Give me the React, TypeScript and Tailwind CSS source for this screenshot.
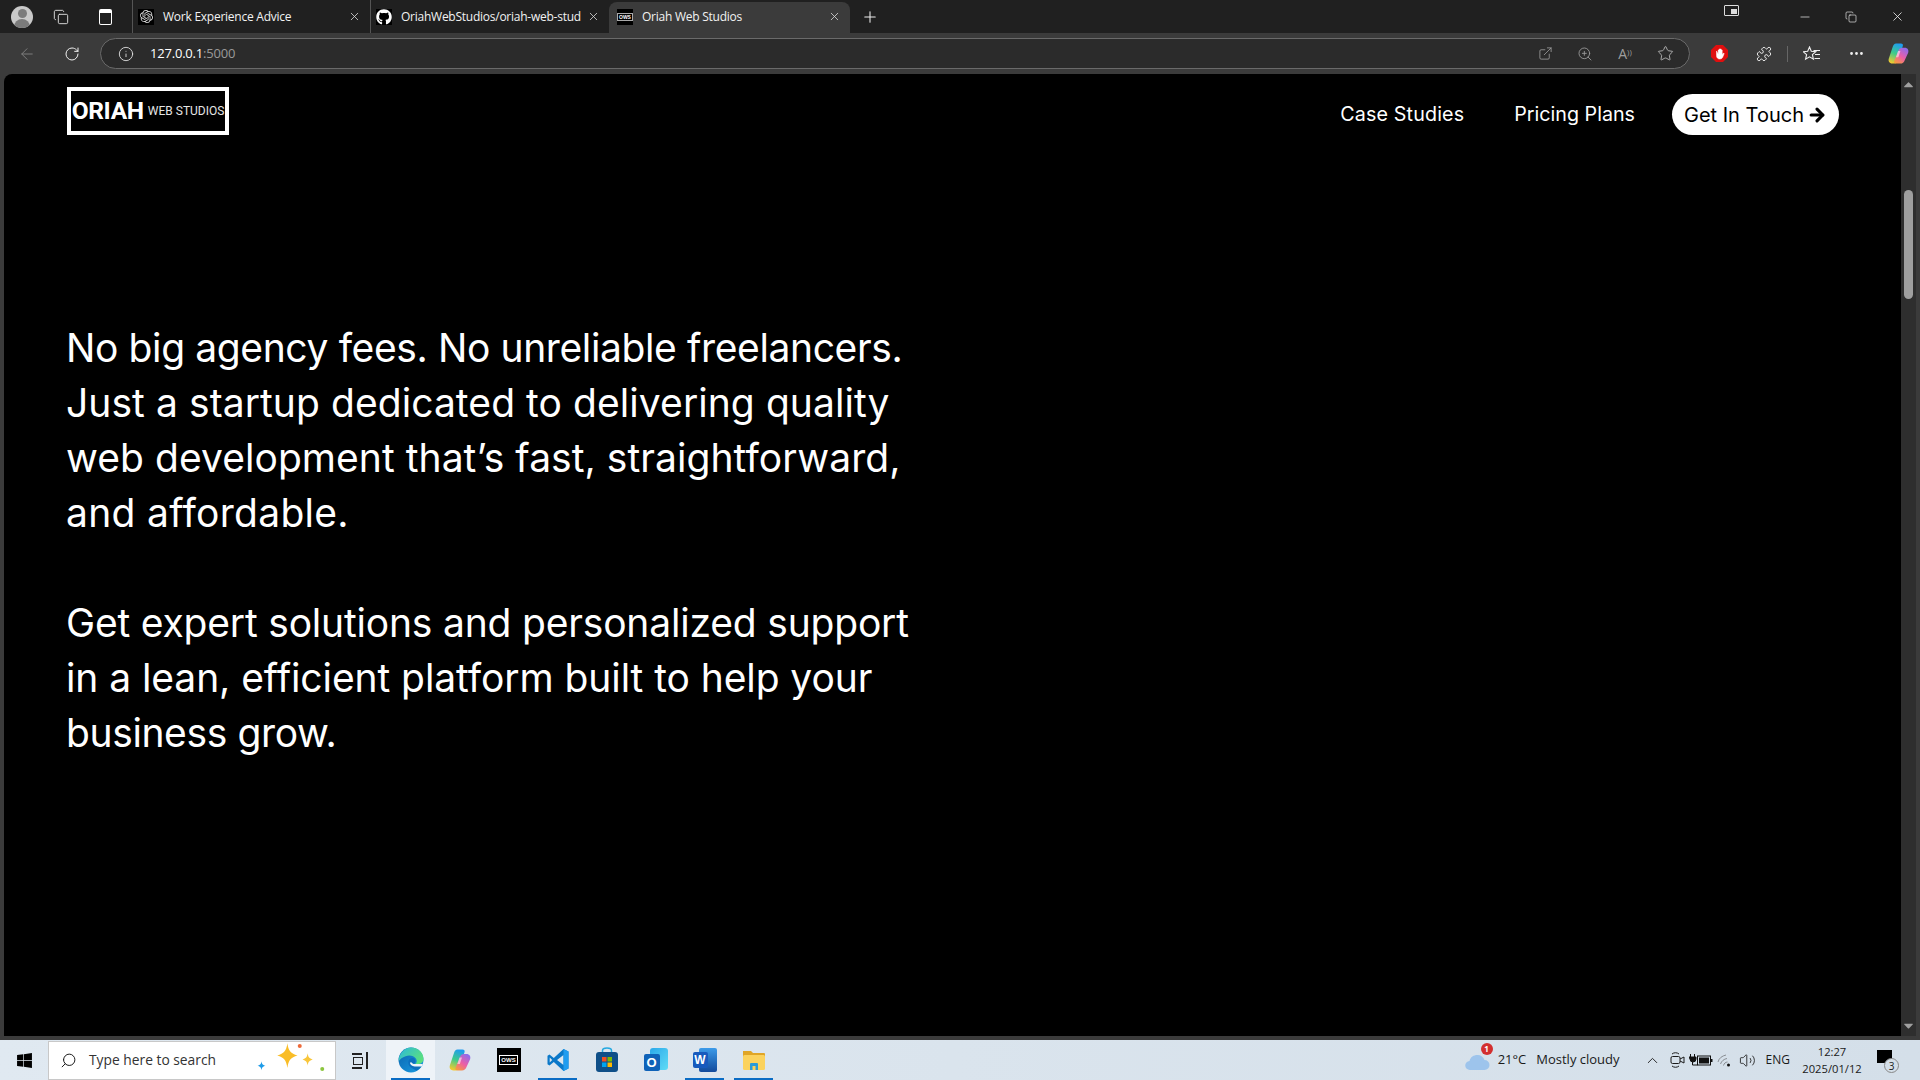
import { ArrowLeft, RotateCw, Info, ExternalLink, ZoomIn, Star, Minus, X, Plus, Search, ChevronUp, Volume2, MoreHorizontal, ArrowRight, Puzzle, Copy } from 'lucide-react';
import { FaGithub, FaWindows, FaCaretUp, FaCaretDown } from 'react-icons/fa';
import { SiOpenai } from 'react-icons/si';

const UI_FONT = "font-['Open_Sans','Noto_Sans',sans-serif]";

// per-line tracking keeps the line ends close to the original Poppins widths
const BODY_COPY = [
  [
    { text: 'No big agency fees. No unreliable freelancers.', track: 'tracking-[-0.38px]' },
    { text: 'Just a startup dedicated to delivering quality', track: 'tracking-[0.07px]' },
    { text: 'web development that’s fast, straightforward,', track: 'tracking-[0.05px]' },
    { text: 'and affordable.', track: 'tracking-[0.3px]' },
  ],
  [
    { text: 'Get expert solutions and personalized support', track: 'tracking-[-0.19px]' },
    { text: 'in a lean, efficient platform built to help your', track: 'tracking-[-0.08px]' },
    { text: 'business grow.', track: 'tracking-[-0.38px]' },
  ],
];

const Tab: React.FC<{ title: string; icon: React.ReactNode; width: string; active?: boolean }> = ({ title, icon, width, active }) => (
  <div className={`flex shrink-0 items-center pr-[9px] ${width} ${active ? 'mt-[2px] h-[31px] rounded-t-lg bg-[#3b3b3b] pb-[2px] pl-[8px]' : 'h-[33px] border-l border-[#555] pl-[5px]'}`}>
    <span className="flex h-4 w-4 shrink-0 items-center justify-center bg-black">{icon}</span>
    <span className="ml-[9px] min-w-0 flex-1 whitespace-nowrap text-[12px] tracking-[-0.25px] text-[#f2f2f2]">{title}</span>
    <X size={13} className="shrink-0 text-[#d8d8d8]" strokeWidth={1.5} />
  </div>
);

const Slot: React.FC<{ w: string; children: React.ReactNode; className?: string }> = ({ w, children, className }) => (
  <div className={`flex shrink-0 items-center justify-center ${w} ${className ?? ''}`}>{children}</div>
);

const CopilotIcon: React.FC<{ size: number; id: string }> = ({ size, id }) => (
  <svg width={size} height={size} viewBox="0 0 24 24">
    <defs>
      <linearGradient id={`${id}A`} x1="0.6" y1="0" x2="0.3" y2="1">
        <stop offset="0" stopColor="#1f9cf0" />
        <stop offset="0.5" stopColor="#3ecb8a" />
        <stop offset="1" stopColor="#f5c92e" />
      </linearGradient>
      <linearGradient id={`${id}B`} x1="0.8" y1="0" x2="0.2" y2="1">
        <stop offset="0" stopColor="#8a6cf0" />
        <stop offset="0.55" stopColor="#ec5ea6" />
        <stop offset="1" stopColor="#f79a3e" />
      </linearGradient>
    </defs>
    <path d="M9.500 1.500h5c1.800 0 2.500 1.200 2 2.800L12 18.500c-.8 2.500-2.300 4-4.500 4H5.500c-3 0-4.500-2.400-3.600-5.200L6 5c.7-2.200 1.600-3.500 3.500-3.500z" fill={`url(#${id}A)`} />
    <path d="M16 6h2.500c3 0 4.500 2.400 3.600 5.200L18.500 19c-.8 2.300-2.300 3.500-4.500 3.500H9.500c-1.800 0-2.500-1.200-2-2.800L12 9c.6-2 2-3 4-3z" fill={`url(#${id}B)`} />
    <path d="M11.500 9.500h2.500l-2.200 6.500H9.300z" fill="#fff" opacity="0.55" />
  </svg>
);

const EdgeIcon = () => (
  <svg width="26" height="26" viewBox="0 0 24 24">
    <defs>
      <linearGradient id="edA" x1="0" y1="0" x2="1" y2="0.6">
        <stop offset="0" stopColor="#2bb8dc" />
        <stop offset="1" stopColor="#5be07e" />
      </linearGradient>
      <linearGradient id="edB" x1="0" y1="0" x2="1" y2="1">
        <stop offset="0" stopColor="#0b62ad" />
        <stop offset="1" stopColor="#1a9ee4" />
      </linearGradient>
    </defs>
    <circle cx="12" cy="12" r="11.500" fill="url(#edB)" />
    <path d="M.7 11C2 4.500 7 .5 12 .5c6.500 0 11.500 4.500 11.500 10.500 0 3-2.500 4.800-5.500 4.800h-2c1.500-1.300 1.800-3.500.5-5.300C14.500 8 10.500 7 7 8.500 4 9.700 2 11 .7 13z" fill="url(#edA)" />
    <path d="M9.500 14c0-2.500 2.200-4 4.300-3.800 1.500.2 2.300 1.400 2.300 2.800 0 1.200-.6 2.200-1.500 2.800h8c-1 2.500-3 5-5.500 6.200l-4-2.500C10.800 18.500 9.500 16.500 9.500 14z" fill="#0d6fbe" />
    <path d="M11 14.200c.2 2.300 2.800 3.800 5.500 3.800h5.500l1-2.200h-7.500c-1.200 0-2.300-.5-2.800-1.600z" fill="#eef3f8" />
  </svg>
);

const VsCodeIcon = () => (
  <svg width="24" height="24" viewBox="0 0 24 24">
    <path d="M17.500 1 22.500 3.500v17L17.500 23 7.800 14 3.500 17.500 1.500 16.300V7.700l2-1.200L7.800 10zM17.500 7 11 12l6.500 5zM3.700 9.500v5L6.200 12z" fill="#0a78c9" />
    <path d="M17.500 1 22.500 3.500v17L17.500 23z" fill="#1f9cf0" />
  </svg>
);

const StoreIcon = () => (
  <svg width="24" height="26" viewBox="0 0 24 26">
    <path d="M7.500 6V3.500C7.500 2 9 1 12 1s4.500 1 4.500 2.500V6" fill="none" stroke="#27a9e0" strokeWidth="1.500" />
    <rect x="1" y="5" width="22" height="20" rx="3" fill="#0f4f88" />
    <rect x="7" y="10" width="4.500" height="4.500" fill="#f25022" />
    <rect x="12.500" y="10" width="4.500" height="4.500" fill="#7fba00" />
    <rect x="7" y="15.500" width="4.500" height="4.500" fill="#00a4ef" />
    <rect x="12.500" y="15.500" width="4.500" height="4.500" fill="#ffb900" />
  </svg>
);

const OutlookIcon = () => (
  <div className="relative h-[24px] w-[24px]">
    <div className="absolute right-0 top-0 h-[22px] w-[18px] rounded-[3px] bg-gradient-to-br from-[#2aa8ea] to-[#5fdcf5]" />
    <div className="absolute bottom-[1px] left-0 flex h-[17px] w-[16px] items-center justify-center rounded-[2px] bg-[#0f62b8] font-['Liberation_Sans',sans-serif] text-[13px] font-bold text-white">O</div>
  </div>
);

const WordIcon = () => (
  <div className="relative h-[24px] w-[24px]">
    <div className="absolute right-0 top-0 h-[24px] w-[18px] rounded-[2px] bg-gradient-to-b from-[#3d9be9] to-[#134a9c]" />
    <div className="absolute bottom-[4px] left-0 flex h-[16px] w-[15px] items-center justify-center rounded-[2px] bg-[#185abd] font-['Liberation_Sans',sans-serif] text-[12px] font-bold text-white">W</div>
  </div>
);

const ExplorerIcon = () => (
  <svg width="24" height="24" viewBox="0 0 24 24">
    <path d="M1 3h8l2 2h11a1 1 0 0 1 1 1v3H1z" fill="#e0a526" />
    <rect x="1" y="7" width="22" height="15" rx="1.500" fill="#fbd25d" />
    <path d="M8 22v-6a1 1 0 0 1 1-1h6a1 1 0 0 1 1 1v6h-2.500v-4h-3v4z" fill="#2a9bd8" />
  </svg>
);

const OriahMark = () => (
  <div className="flex h-[24px] w-[24px] items-center justify-center bg-black">
    <span className="border border-white px-[1px] font-['Liberation_Sans',sans-serif] text-[6px] font-bold leading-[8px] text-white">OWS</span>
  </div>
);

const SparkleIcon = () => (
  <svg width="72" height="34" viewBox="0 0 64 30">
    <path d="M27 0c1 7 3 9 9 11-6 2-8 4-9 11-1-7-3-9-9-11 6-2 8-4 9-11z" fill="#f9bd27" />
    <path d="M45 9c.5 3.500 1.500 4.500 4.500 5.500-3 1-4 2-4.500 5.500-.5-3.500-1.500-4.500-4.500-5.500 3-1 4-2 4.500-5.500z" fill="#f9c63a" />
    <path d="M4 16c.4 2.500 1 3.200 3.500 4-2.500.8-3.100 1.500-3.500 4-.4-2.500-1-3.200-3.500-4 2.500-.8 3.100-1.500 3.500-4z" fill="#1e9be8" />
    <circle cx="38" cy="2.500" r="1.800" fill="#ee6a3a" />
    <circle cx="58" cy="23" r="1.800" fill="#8cc63f" />
  </svg>
);

const TaskIcon: React.FC<{ active?: boolean; running?: boolean; children: React.ReactNode }> = ({ active, running, children }) => (
  <div className={`relative flex h-10 w-[49px] shrink-0 items-center justify-center ${active ? 'bg-[#eef3f8]' : ''}`}>
    {children}
    {running && <div className="absolute bottom-0 left-[5px] right-[5px] h-[2px] bg-[#0a6cc4]" />}
  </div>
);

export default function App() {
  return (
    <div className={`flex h-[1080px] w-[1920px] flex-col overflow-hidden bg-[#3b3b3b] ${UI_FONT}`}>
      {/* tab strip */}
      <div className="flex h-[33px] shrink-0 items-start bg-[#202020]">
        <Slot w="w-[44px]" className="h-[33px]">
          <div className="flex h-[22px] w-[22px] items-end justify-center overflow-hidden rounded-full bg-[#c9c9c9]">
            <div className="relative h-[19px] w-[16px]">
              <div className="mx-auto h-[9px] w-[9px] rounded-full bg-[#7b7b7b]" />
              <div className="mt-[1px] h-[9px] w-[16px] rounded-t-full bg-[#7b7b7b]" />
            </div>
          </div>
        </Slot>
        <Slot w="w-[34px]" className="h-[33px]">
          <Copy size={16} strokeWidth={1.4} className="text-[#e0e0e0]" />
        </Slot>
        <Slot w="w-[54px]" className="h-[33px]">
          <div className="h-[16px] w-[13px] rounded-[2px] border border-t-[4px] border-white" />
        </Slot>
        <Tab title="Work Experience Advice" width="w-[238px]" icon={<SiOpenai size={13} className="text-[#ddd]" />} />
        <Tab title="OriahWebStudios/oriah-web-stud" width="w-[239px]" icon={<FaGithub size={16} className="text-white" />} />
        <Tab
          title="Oriah Web Studios"
          width="w-[241px]"
          active
          icon={<span className="border border-[#aaa] px-[1px] font-['Liberation_Sans',sans-serif] text-[5px] font-bold leading-[6px] text-white">OWS</span>}
        />
        <Slot w="w-[40px]" className="h-[33px]">
          <Plus size={18} strokeWidth={1.4} className="text-[#eee]" />
        </Slot>
        <div className="flex-1" />
        <Slot w="w-[32px]" className="mr-[35px] h-[21px]">
          <div className="relative h-[11px] w-[15px] rounded-[1px] border border-[#ddd]">
            <div className="absolute bottom-[1px] right-[1px] h-[5px] w-[6px] bg-[#ddd]" />
          </div>
        </Slot>
        <Slot w="w-[46px]" className="h-[33px]">
          <Minus size={14} strokeWidth={1.2} className="text-[#f0f0f0]" />
        </Slot>
        <Slot w="w-[46px]" className="h-[33px]">
          <Copy size={12} strokeWidth={1.3} className="text-[#f0f0f0]" />
        </Slot>
        <Slot w="w-[46px]" className="h-[33px]">
          <X size={15} strokeWidth={1.3} className="text-[#f0f0f0]" />
        </Slot>
      </div>

      {/* toolbar */}
      <div className="flex h-[41px] shrink-0 items-center bg-[#3b3b3b]">
        <Slot w="w-[54px]">
          <ArrowLeft size={18} strokeWidth={1.3} className="text-[#7d7d7d]" />
        </Slot>
        <Slot w="w-[36px]">
          <RotateCw size={16} strokeWidth={1.5} className="text-[#f0f0f0]" />
        </Slot>
        <div className="ml-[10px] flex h-[31px] w-[1590px] shrink-0 items-center rounded-full border border-[#6a6a6a] bg-[#2b2b2b] pl-[17px]">
          <Info size={16} strokeWidth={1.3} className="text-[#e6e6e6]" />
          <span className="ml-[16px] text-[13px] tracking-[-0.2px] text-white">
            127.0.0.1<span className="text-[#9a9a9a]">:5000</span>
          </span>
          <div className="flex-1" />
          <Slot w="w-[40px]">
            <ExternalLink size={15} strokeWidth={1.3} className="text-[#9e9e9e]" />
          </Slot>
          <Slot w="w-[40px]">
            <ZoomIn size={16} strokeWidth={1.3} className="text-[#9e9e9e]" />
          </Slot>
          <Slot w="w-[40px]">
            <span className="text-[14px] text-[#9e9e9e]">A<sup className="text-[8px]">))</sup></span>
          </Slot>
          <Slot w="w-[40px]" className="mr-[4px]">
            <Star size={17} strokeWidth={1.3} className="text-[#b5b5b5]" />
          </Slot>
        </div>
        <Slot w="w-[58px]">
          <svg width="17" height="17" viewBox="0 0 17 17">
            <path d="M5 0h7l5 5v7l-5 5H5l-5-5V5z" fill="#e00f0f" />
            <path d="M5.500 6v4.500c0 2 1.200 3.500 3.200 3.500s3-1 3.500-3l1-2.500-1-.2-1 1.200V5h-1v2.500V4h-1v3.500V4h-1v3.500V5h-1v4z" fill="#fff" stroke="#fff" strokeWidth="0.5" />
          </svg>
        </Slot>
        <Slot w="w-[32px]">
          <Puzzle size={16} strokeWidth={1.4} className="text-[#f0f0f0]" />
        </Slot>
        <div className="ml-[7px] h-[16px] w-px bg-[#666]" />
        <Slot w="w-[48px]">
          <svg width="18" height="16" viewBox="0 0 18 16" fill="none" stroke="#f0f0f0" strokeWidth="1.100">
            <path d="M6.500 1 8.300 5.300l4.500.4-3.400 3 1 4.500-3.900-2.400-3.900 2.400 1-4.500-3.400-3 4.500-.4z" />
            <path d="M10.500 4.500H17M12 8.500h5M11.500 12.500H17" />
          </svg>
        </Slot>
        <Slot w="w-[40px]">
          <MoreHorizontal size={17} strokeWidth={2} className="text-[#f0f0f0]" />
        </Slot>
        <Slot w="w-[44px]" className="-mr-[4px]">
          <CopilotIcon size={23} id="cpTop" />
        </Slot>
      </div>

      {/* page */}
      <div className="flex min-h-0 flex-1 px-[4px]">
        <main className="min-w-0 flex-1 rounded-tl-lg bg-black pl-[63px] pr-[62px] pt-[13px] font-['Inter',sans-serif] text-white">
          <nav className="flex h-[48px] items-start justify-between">
            <div className="flex h-[48px] w-[162px] items-center justify-center border-4 border-white font-['Roboto',sans-serif]">
              <span className="text-[24.500px] font-bold tracking-[-0.3px]">ORIAH</span>
              <span className="ml-[4px] whitespace-nowrap text-[12px] text-[#e5e5e5]">WEB STUDIOS</span>
            </div>
            <div className="mt-[7px] flex items-center">
              <a className="text-[19.700px] font-[440] tracking-[0.15px]">Case Studies</a>
              <a className="ml-[50px] text-[19.700px] font-[440]">Pricing Plans</a>
              <button className="ml-[37px] flex h-[41px] w-[167px] items-center justify-center rounded-full bg-white text-[20px] font-[440] text-black">
                Get In Touch
                <ArrowRight size={20} strokeWidth={3.8} className="ml-[3px]" />
              </button>
            </div>
          </nav>
          <section className="mt-[185px]">
            {BODY_COPY.map((lines, i) => (
              <p key={i} className="-ml-px mb-[55px] whitespace-nowrap text-[39px] font-[440] leading-[55px]">
                {lines.map((line) => (
                  <span key={line.text} className={`block ${line.track}`}>{line.text}</span>
                ))}
              </p>
            ))}
          </section>
        </main>
        <div className="flex w-[15px] shrink-0 flex-col items-center bg-[#2e2e2e] py-[3px]">
          <FaCaretUp size={15} className="text-[#a0a0a0]" />
          <div className="mt-[98px] h-[109px] w-[9px] rounded-full bg-[#9f9f9f]" />
          <div className="flex-1" />
          <FaCaretDown size={15} className="text-[#a0a0a0]" />
        </div>
      </div>
      <div className="h-[4px] shrink-0" />

      {/* taskbar */}
      <div className="flex h-10 shrink-0 items-center bg-gradient-to-r from-[#e0e9f1] to-[#d4dfe9] text-[#1a1a1a]">
        <Slot w="w-[48px]">
          <FaWindows size={17} className="text-black" />
        </Slot>
        <div className="flex h-[39px] w-[288px] shrink-0 items-center border border-[#c8c8c8] bg-white pl-[11px] pr-[6px]">
          <Search size={17} strokeWidth={1.4} className="-scale-x-100" />
          <span className="ml-[12px] text-[13.800px] text-[#333]">Type here to search</span>
          <div className="flex-1" />
          <SparkleIcon />
        </div>
        <Slot w="w-[50px]" className="h-10 pr-[2px]">
          <div className="relative h-[17px] w-[16px]">
            <div className="absolute left-0 top-[1px] h-[2px] w-[10px] bg-[#222]" />
            <div className="absolute left-[1px] top-[5px] h-[8px] w-[10px] border border-[#222]" />
            <div className="absolute bottom-0 left-0 h-[2px] w-[10px] bg-[#222]" />
            <div className="absolute right-0 top-0 h-[17px] w-[2px] bg-[#222]" />
          </div>
        </Slot>
        <TaskIcon active running><EdgeIcon /></TaskIcon>
        <TaskIcon><CopilotIcon size={24} id="cpBar" /></TaskIcon>
        <TaskIcon><OriahMark /></TaskIcon>
        <TaskIcon running><VsCodeIcon /></TaskIcon>
        <TaskIcon><StoreIcon /></TaskIcon>
        <TaskIcon><OutlookIcon /></TaskIcon>
        <TaskIcon running><WordIcon /></TaskIcon>
        <TaskIcon running><ExplorerIcon /></TaskIcon>
        <div className="flex-1" />
        <div className="relative mr-[7px] h-[24px] w-[26px] shrink-0">
          <svg width="26" height="24" viewBox="0 0 26 24" className="absolute inset-0">
            <path d="M5 22a4.500 4.500 0 0 1-.5-9c1-4 4-6 8-6 3.500 0 6 2 7 5a5 5 0 0 1 0 10z" fill="#9dc4ec" />
          </svg>
          <div className="absolute -top-[5px] right-[-2px] flex h-[12px] w-[12px] items-center justify-center rounded-full bg-[#d32f2f] text-[8px] font-bold leading-none text-white">1</div>
        </div>
        <span className="text-[13px]">21°C</span>
        <span className="ml-[10px] whitespace-nowrap text-[13px]">Mostly cloudy</span>
        <Slot w="w-[49px]" className="pl-[17px]">
          <ChevronUp size={17} strokeWidth={1.3} />
        </Slot>
        <Slot w="w-[17px]">
          <svg width="15" height="18" viewBox="0 0 15 18" fill="none" stroke="#1a1a1a" strokeWidth="1">
            <path d="M2 3C4 1.300 7 1.300 9 3M2 15c2 1.700 5 1.700 7 0" />
            <rect x="1" y="5.500" width="9" height="7" rx="1.500" />
            <path d="M10 8l4-2v6l-4-2" />
          </svg>
        </Slot>
        <Slot w="w-[30px]">
          <svg width="24" height="14" viewBox="0 0 24 14">
            <path d="M1.500 1v3M5.500 1v3M0 4h7v2a3 3 0 0 1-3 3 3 3 0 0 1-3-3z" fill="#111" stroke="#111" strokeWidth="1" />
            <path d="M3.500 9v3h5" fill="none" stroke="#111" strokeWidth="1" />
            <rect x="8.500" y="3" width="13" height="9" fill="none" stroke="#111" strokeWidth="1" />
            <rect x="10" y="4.500" width="10" height="6" fill="#111" />
            <rect x="22" y="6" width="1.500" height="3" fill="#111" />
          </svg>
        </Slot>
        <Slot w="w-[18px]">
          <svg width="15" height="14" viewBox="0 0 15 14" fill="none" stroke="#8a8f94" strokeWidth="1">
            <path d="M1 9C2 5 5 3 9 2M3.500 11C4.500 8 7 6 10 5.500M6.500 12.500C7 10.500 8.500 9 10.500 9" />
            <circle cx="11.500" cy="12" r="1.500" fill="#111" stroke="none" />
          </svg>
        </Slot>
        <Slot w="w-[28px]">
          <Volume2 size={17} strokeWidth={1.2} />
        </Slot>
        <span className="ml-[4px] text-[12px]">ENG</span>
        <div className="ml-[13px] flex w-[58px] shrink-0 flex-col items-center text-[11.200px] leading-[17px]">
          <span>12:27</span>
          <span className="whitespace-nowrap">2025/01/12</span>
        </div>
        <div className="relative ml-[16px] mr-[23px] h-[24px] w-[20px] shrink-0">
          <div className="absolute left-0 top-[2px] h-[13px] w-[15px] bg-black" />
          <div className="absolute left-[7px] top-[10px] flex h-[15px] w-[15px] items-center justify-center rounded-full border border-[#888] bg-[#d4dfe9] text-[10px] leading-none">3</div>
        </div>
      </div>
    </div>
  );
}
